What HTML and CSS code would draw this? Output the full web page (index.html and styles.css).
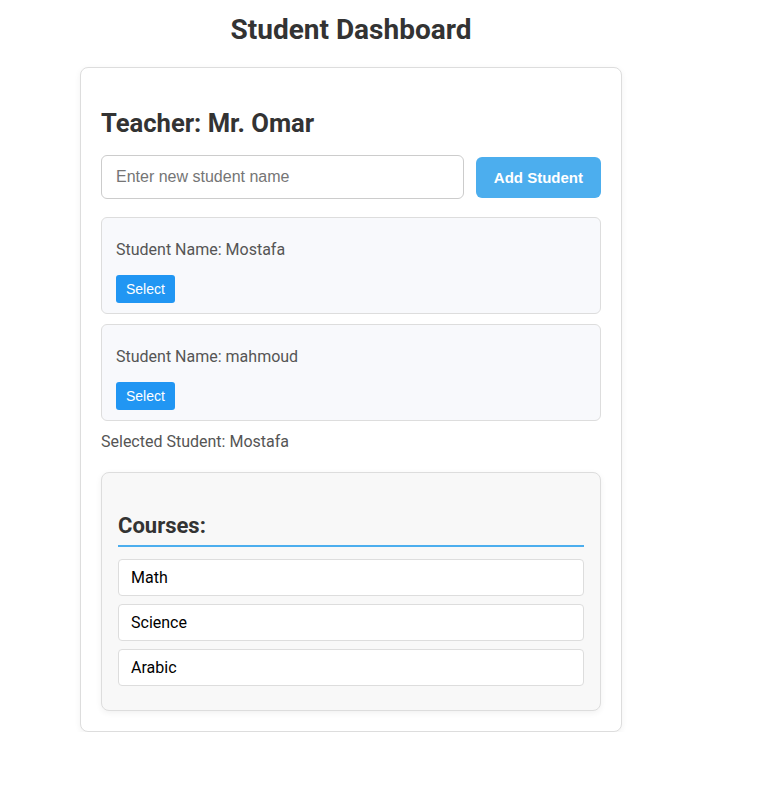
FILE: index.html
```html
<!DOCTYPE html>
<html>
<head>
<meta charset="utf-8">
<link rel="stylesheet" href="styles.css">
</head>
<body>
<div class="page">
  <h1 class="title">Student Dashboard</h1>
  <div class="card">
    <h2 class="teacher">Teacher: Mr. Omar</h2>
    <div class="add-row">
      <input class="name-input" type="text" placeholder="Enter new student name">
      <button class="add-btn">Add Student</button>
    </div>
    <div class="student">
      <p class="student-name">Student Name: Mostafa</p>
      <button class="select-btn">Select</button>
    </div>
    <div class="student">
      <p class="student-name">Student Name: mahmoud</p>
      <button class="select-btn">Select</button>
    </div>
    <p class="selected">Selected Student: Mostafa</p>
    <div class="courses">
      <h3 class="courses-title">Courses:</h3>
      <ul class="course-list">
        <li class="course">Math</li>
        <li class="course">Science</li>
        <li class="course">Arabic</li>
      </ul>
    </div>
  </div>
</div>
</body>
</html>
```
FILE: styles.css
```css
html, body {
  margin: 0;
  padding: 0;
  background: #fff;
}
body {
  font-family: Roboto, "Liberation Sans", sans-serif;
  color: #333;
}
.page {
  width: 542px;
  margin-left: 80px;
  padding-top: 1px;
}
.title {
  font-size: 28px;
  font-weight: 700;
  text-align: center;
  color: #333;
  margin: 12px 0 21px;
  line-height: 33px;
}
.card {
  border: 1px solid #ddd;
  border-radius: 8px;
  padding: 20px;
  box-shadow: 0 2px 6px rgba(0, 0, 0, 0.06);
  background: #fff;
}
.teacher {
  font-size: 25.6px;
  font-weight: 700;
  color: #333;
  margin: 20px 0 17px;
  line-height: 30px;
}
.add-row {
  display: flex;
  align-items: center;
  gap: 12px;
  margin-bottom: 18px;
}
.name-input {
  flex: 1;
  min-width: 0;
  font-family: "Liberation Sans", Arial, sans-serif;
  font-size: 16px;
  padding: 12px 14px;
  border: 1px solid #ccc;
  border-radius: 6px;
  line-height: 18px;
  outline: none;
}
.name-input::placeholder {
  color: #757575;
}
.add-btn {
  font-family: "Liberation Sans", Arial, sans-serif;
  font-size: 15px;
  font-weight: 700;
  color: #fff;
  background: #4caeee;
  border: none;
  border-radius: 6px;
  padding: 12px 18px;
  line-height: 17px;
}
.student {
  background: #f8f9fc;
  border: 1px solid #ddd;
  border-radius: 6px;
  padding: 10px 14px;
  margin-bottom: 10px;
}
.student-name {
  font-size: 16px;
  color: #555;
  margin: 12px 0 16px;
  line-height: 19px;
}
.select-btn {
  font-family: "Liberation Sans", Arial, sans-serif;
  font-size: 14px;
  color: #fff;
  background: #2196f3;
  border: none;
  border-radius: 3px;
  padding: 6px 10px;
  line-height: 16px;
  display: block;
}
.selected {
  font-size: 16px;
  color: #555;
  margin: 11px 0 21px;
  line-height: 19px;
}
.courses {
  background: #f8f8f8;
  border: 1px solid #ddd;
  border-radius: 8px;
  padding: 16px;
  box-shadow: 0 2px 6px rgba(0, 0, 0, 0.06);
}
.courses-title {
  font-size: 22px;
  font-weight: 700;
  color: #333;
  margin: 24px 0 12px;
  line-height: 26px;
  padding-bottom: 6px;
  border-bottom: 2px solid #4caeee;
}
.course-list {
  list-style: none;
  margin: 0;
  padding: 0;
}
.course {
  background: #fff;
  border: 1px solid #ddd;
  border-radius: 4px;
  padding: 8px 12px;
  font-size: 16px;
  line-height: 19px;
  color: #000;
  margin-bottom: 8px;
}
```
